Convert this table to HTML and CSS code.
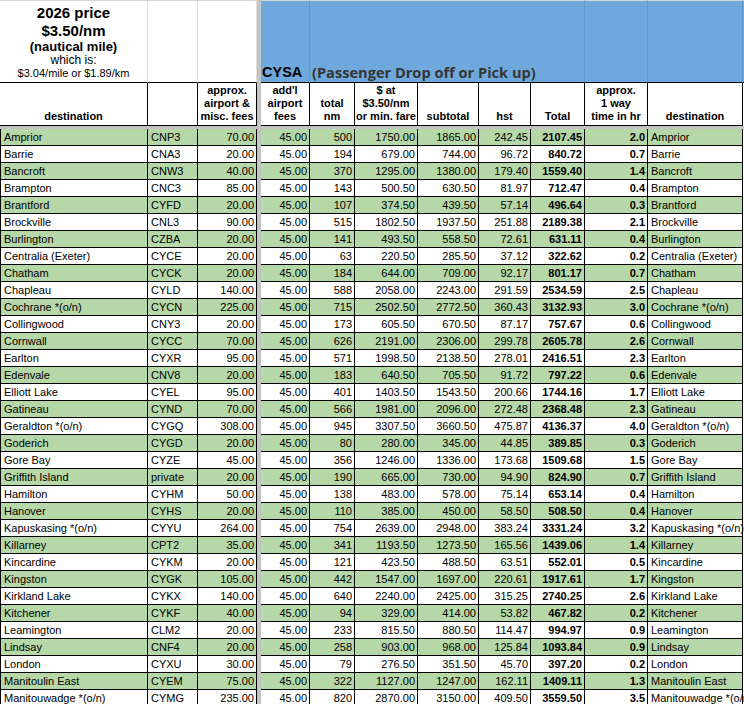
FILE: index.html
```html
<!DOCTYPE html>
<html>
<head>
<meta charset="utf-8">
<title>2026 price CYSA</title>
<link rel="stylesheet" href="styles.css">
</head>
<body>
<div class="sheet">
  <div class="fz-col"></div>
  <div class="fz-row"></div>

  <div class="top">
    <div class="title">
      <span class="t1">2026 price</span>
      <span class="t2">$3.50/nm</span>
      <span class="t3">(nautical mile)</span>
      <span class="t4">which is:</span>
      <span class="t5">$3.04/mile or $1.89/km</span>
    </div>
    <div></div>
    <div></div>
    <div class="b cysa">CYSA</div>
    <div class="b pass">(Passenger Drop off or Pick up)</div>
    <div class="b"></div>
    <div class="b"></div>
    <div class="b last"></div>
  </div>

  <div class="h">
    <div>destination</div>
    <div></div>
    <div>approx.<br>airport &amp;<br>misc. fees</div>
    <div>add'l<br>airport<br>fees</div>
    <div>total<br>nm</div>
    <div>$ at<br>$3.50/nm<br>or min. fare</div>
    <div>subtotal</div>
    <div>hst</div>
    <div>Total</div>
    <div>approx.<br>1 way<br>time in hr</div>
    <div>destination</div>
    <div></div>
  </div>

  <div class="r g"><div>Amprior</div><div>CNP3</div><div>70.00</div><div>45.00</div><div>500</div><div>1750.00</div><div>1865.00</div><div>242.45</div><div>2107.45</div><div>2.0</div><div>Amprior</div><div></div></div>
  <div class="r"><div>Barrie</div><div>CNA3</div><div>20.00</div><div>45.00</div><div>194</div><div>679.00</div><div>744.00</div><div>96.72</div><div>840.72</div><div>0.7</div><div>Barrie</div><div></div></div>
  <div class="r g"><div>Bancroft</div><div>CNW3</div><div>40.00</div><div>45.00</div><div>370</div><div>1295.00</div><div>1380.00</div><div>179.40</div><div>1559.40</div><div>1.4</div><div>Bancroft</div><div></div></div>
  <div class="r"><div>Brampton</div><div>CNC3</div><div>85.00</div><div>45.00</div><div>143</div><div>500.50</div><div>630.50</div><div>81.97</div><div>712.47</div><div>0.4</div><div>Brampton</div><div></div></div>
  <div class="r g"><div>Brantford</div><div>CYFD</div><div>20.00</div><div>45.00</div><div>107</div><div>374.50</div><div>439.50</div><div>57.14</div><div>496.64</div><div>0.3</div><div>Brantford</div><div></div></div>
  <div class="r"><div>Brockville</div><div>CNL3</div><div>90.00</div><div>45.00</div><div>515</div><div>1802.50</div><div>1937.50</div><div>251.88</div><div>2189.38</div><div>2.1</div><div>Brockville</div><div></div></div>
  <div class="r g"><div>Burlington</div><div>CZBA</div><div>20.00</div><div>45.00</div><div>141</div><div>493.50</div><div>558.50</div><div>72.61</div><div>631.11</div><div>0.4</div><div>Burlington</div><div></div></div>
  <div class="r"><div>Centralia (Exeter)</div><div>CYCE</div><div>20.00</div><div>45.00</div><div>63</div><div>220.50</div><div>285.50</div><div>37.12</div><div>322.62</div><div>0.2</div><div>Centralia (Exeter)</div><div></div></div>
  <div class="r g"><div>Chatham</div><div>CYCK</div><div>20.00</div><div>45.00</div><div>184</div><div>644.00</div><div>709.00</div><div>92.17</div><div>801.17</div><div>0.7</div><div>Chatham</div><div></div></div>
  <div class="r"><div>Chapleau</div><div>CYLD</div><div>140.00</div><div>45.00</div><div>588</div><div>2058.00</div><div>2243.00</div><div>291.59</div><div>2534.59</div><div>2.5</div><div>Chapleau</div><div></div></div>
  <div class="r g"><div>Cochrane *(o/n)</div><div>CYCN</div><div>225.00</div><div>45.00</div><div>715</div><div>2502.50</div><div>2772.50</div><div>360.43</div><div>3132.93</div><div>3.0</div><div>Cochrane *(o/n)</div><div></div></div>
  <div class="r"><div>Collingwood</div><div>CNY3</div><div>20.00</div><div>45.00</div><div>173</div><div>605.50</div><div>670.50</div><div>87.17</div><div>757.67</div><div>0.6</div><div>Collingwood</div><div></div></div>
  <div class="r g"><div>Cornwall</div><div>CYCC</div><div>70.00</div><div>45.00</div><div>626</div><div>2191.00</div><div>2306.00</div><div>299.78</div><div>2605.78</div><div>2.6</div><div>Cornwall</div><div></div></div>
  <div class="r"><div>Earlton</div><div>CYXR</div><div>95.00</div><div>45.00</div><div>571</div><div>1998.50</div><div>2138.50</div><div>278.01</div><div>2416.51</div><div>2.3</div><div>Earlton</div><div></div></div>
  <div class="r g"><div>Edenvale</div><div>CNV8</div><div>20.00</div><div>45.00</div><div>183</div><div>640.50</div><div>705.50</div><div>91.72</div><div>797.22</div><div>0.6</div><div>Edenvale</div><div></div></div>
  <div class="r"><div>Elliott Lake</div><div>CYEL</div><div>95.00</div><div>45.00</div><div>401</div><div>1403.50</div><div>1543.50</div><div>200.66</div><div>1744.16</div><div>1.7</div><div>Elliott Lake</div><div></div></div>
  <div class="r g"><div>Gatineau</div><div>CYND</div><div>70.00</div><div>45.00</div><div>566</div><div>1981.00</div><div>2096.00</div><div>272.48</div><div>2368.48</div><div>2.3</div><div>Gatineau</div><div></div></div>
  <div class="r"><div>Geraldton *(o/n)</div><div>CYGQ</div><div>308.00</div><div>45.00</div><div>945</div><div>3307.50</div><div>3660.50</div><div>475.87</div><div>4136.37</div><div>4.0</div><div>Geraldton *(o/n)</div><div></div></div>
  <div class="r g"><div>Goderich</div><div>CYGD</div><div>20.00</div><div>45.00</div><div>80</div><div>280.00</div><div>345.00</div><div>44.85</div><div>389.85</div><div>0.3</div><div>Goderich</div><div></div></div>
  <div class="r"><div>Gore Bay</div><div>CYZE</div><div>45.00</div><div>45.00</div><div>356</div><div>1246.00</div><div>1336.00</div><div>173.68</div><div>1509.68</div><div>1.5</div><div>Gore Bay</div><div></div></div>
  <div class="r g"><div>Griffith Island</div><div>private</div><div>20.00</div><div>45.00</div><div>190</div><div>665.00</div><div>730.00</div><div>94.90</div><div>824.90</div><div>0.7</div><div>Griffith Island</div><div></div></div>
  <div class="r"><div>Hamilton</div><div>CYHM</div><div>50.00</div><div>45.00</div><div>138</div><div>483.00</div><div>578.00</div><div>75.14</div><div>653.14</div><div>0.4</div><div>Hamilton</div><div></div></div>
  <div class="r g"><div>Hanover</div><div>CYHS</div><div>20.00</div><div>45.00</div><div>110</div><div>385.00</div><div>450.00</div><div>58.50</div><div>508.50</div><div>0.4</div><div>Hanover</div><div></div></div>
  <div class="r"><div>Kapuskasing *(o/n)</div><div>CYYU</div><div>264.00</div><div>45.00</div><div>754</div><div>2639.00</div><div>2948.00</div><div>383.24</div><div>3331.24</div><div>3.2</div><div>Kapuskasing *(o/n)</div><div></div></div>
  <div class="r g"><div>Killarney</div><div>CPT2</div><div>35.00</div><div>45.00</div><div>341</div><div>1193.50</div><div>1273.50</div><div>165.56</div><div>1439.06</div><div>1.4</div><div>Killarney</div><div></div></div>
  <div class="r"><div>Kincardine</div><div>CYKM</div><div>20.00</div><div>45.00</div><div>121</div><div>423.50</div><div>488.50</div><div>63.51</div><div>552.01</div><div>0.5</div><div>Kincardine</div><div></div></div>
  <div class="r g"><div>Kingston</div><div>CYGK</div><div>105.00</div><div>45.00</div><div>442</div><div>1547.00</div><div>1697.00</div><div>220.61</div><div>1917.61</div><div>1.7</div><div>Kingston</div><div></div></div>
  <div class="r"><div>Kirkland Lake</div><div>CYKX</div><div>140.00</div><div>45.00</div><div>640</div><div>2240.00</div><div>2425.00</div><div>315.25</div><div>2740.25</div><div>2.6</div><div>Kirkland Lake</div><div></div></div>
  <div class="r g"><div>Kitchener</div><div>CYKF</div><div>40.00</div><div>45.00</div><div>94</div><div>329.00</div><div>414.00</div><div>53.82</div><div>467.82</div><div>0.2</div><div>Kitchener</div><div></div></div>
  <div class="r"><div>Leamington</div><div>CLM2</div><div>20.00</div><div>45.00</div><div>233</div><div>815.50</div><div>880.50</div><div>114.47</div><div>994.97</div><div>0.9</div><div>Leamington</div><div></div></div>
  <div class="r g"><div>Lindsay</div><div>CNF4</div><div>20.00</div><div>45.00</div><div>258</div><div>903.00</div><div>968.00</div><div>125.84</div><div>1093.84</div><div>0.9</div><div>Lindsay</div><div></div></div>
  <div class="r"><div>London</div><div>CYXU</div><div>30.00</div><div>45.00</div><div>79</div><div>276.50</div><div>351.50</div><div>45.70</div><div>397.20</div><div>0.2</div><div>London</div><div></div></div>
  <div class="r g"><div>Manitoulin East</div><div>CYEM</div><div>75.00</div><div>45.00</div><div>322</div><div>1127.00</div><div>1247.00</div><div>162.11</div><div>1409.11</div><div>1.3</div><div>Manitoulin East</div><div></div></div>
  <div class="r"><div>Manitouwadge *(o/n)</div><div>CYMG</div><div>235.00</div><div>45.00</div><div>820</div><div>2870.00</div><div>3150.00</div><div>409.50</div><div>3559.50</div><div>3.5</div><div>Manitouwadge *(o/n)</div><div></div></div>
</div>
</body>
</html>
```

FILE: styles.css
```css
html, body {
  margin: 0;
  padding: 0;
  overflow: hidden;
  background: #fff;
}

body {
  font-family: "Liberation Sans", Arial, sans-serif;
  color: #000;
}

.sheet {
  display: grid;
  grid-template-columns: 148px 50px 59px 4px 49px 45px 63px 61px 52px 54px 63px 95px 60px;
  grid-template-rows: 83px 43px 3px repeat(34, 17px);
  width: max-content;
}

.sheet > div { box-sizing: border-box; }

/* frozen dividers */
.fz-col {
  grid-column: 4;
  grid-row: 1 / -1;
  background: #c4c4c4;
}

.fz-row {
  grid-column: 1 / -1;
  grid-row: 3;
  background: #c4c4c4;
}

.top, .h, .r { display: contents; }

/* title row */
.top > div {
  box-sizing: border-box;
  border-top: 1px solid #d6d6d6;
  border-right: 1px solid #e0e0e0;
  border-bottom: 1px solid #000;
  white-space: nowrap;
}

.title {
  display: flex;
  flex-direction: column;
  align-items: center;
  padding-top: 2px;
  font-weight: bold;
}

.title span { display: block; }
.t1 { font-size: 15px; line-height: 19px; }
.t2 { font-size: 15px; line-height: 17px; }
.t3 { font-size: 13px; line-height: 15px; }
.t4 { font-size: 12px; line-height: 13px; font-weight: normal; }
.t5 { font-size: 11px; line-height: 12px; font-weight: normal; }

.top > .b {
  background: #6fa8dc;
  border-right-color: #5f9ad3;
  display: flex;
  align-items: flex-end;
  overflow: visible;
}

.top > .cysa {
  font-size: 14.5px;
  font-weight: bold;
  line-height: 17px;
  padding: 0 0 1px 1px;
}

.top > .pass {
  grid-column: span 5;
  font-family: "Open Sans", "Liberation Sans", sans-serif;
  font-weight: 700;
  font-size: 14.6px;
  line-height: 17px;
  color: #353535;
  padding: 0 0 1px 2px;
}

.top > .last { border-right: 0; }

/* column header row */
.h > div {
  box-sizing: border-box;
  border-right: 1px solid #000;
  border-bottom: 1px solid #000;
  display: flex;
  align-items: flex-end;
  justify-content: center;
  text-align: center;
  font-weight: bold;
  font-size: 11px;
  line-height: 13px;
  padding-bottom: 2px;
  white-space: nowrap;
}

.h > div:last-child { border: 0; }

/* data rows */
.r > div {
  box-sizing: border-box;
  border-right: 1px solid #000;
  border-bottom: 1px solid #000;
  display: flex;
  align-items: flex-end;
  justify-content: flex-end;
  padding: 0 2px 1px 3px;
  font-size: 11px;
  line-height: 13px;
  white-space: nowrap;
  overflow: hidden;
}

.r > div:nth-child(1) {
  border-left: 1px solid #000;
  justify-content: flex-start;
}

.r > div:nth-child(2),
.r > div:nth-child(11) { justify-content: flex-start; }

.r > div:nth-child(11) { overflow: visible; }

.r > div:nth-child(9),
.r > div:nth-child(10) { font-weight: bold; }

.r > div:nth-child(12) { border: 0; }

.r.g > div { background: #b6d7a8; }
.r.g > div:nth-child(12) { background: transparent; }
```
